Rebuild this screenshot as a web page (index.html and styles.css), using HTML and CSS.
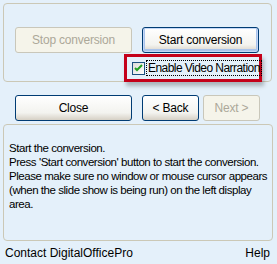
FILE: index.html
```html
<!DOCTYPE html>
<html lang="en">
<head>
    <meta charset="UTF-8">
    <title>Conversion</title>
    <link rel="stylesheet" href="styles.css">
</head>
<body>
    <div class="panel convert-panel">
        <div class="btn-row">
            <button class="btn wide" disabled>Stop conversion</button>
            <button class="btn wide default">Start conversion</button>
        </div>
        <div class="narration">
            <span class="check">
                <svg width="9" height="8" viewBox="0 0 9 8"><path d="M1 4 L3 6 L8 1" fill="none" stroke="#21a121" stroke-width="2"/></svg>
            </span>
            <span class="narration-label">Enable Video Narration</span>
        </div>
    </div>

    <div class="btn-row nav-row">
        <button class="btn wide">Close</button>
        <div class="nav-pair">
            <button class="btn small">&lt; Back</button>
            <button class="btn small" disabled>Next &gt;</button>
        </div>
    </div>

    <div class="panel info">
        <p>Start the conversion.</p>
        <p>Press 'Start conversion' button to start the conversion.</p>
        <p>Please make sure no window or mouse cursor appears (when the slide show is being run) on the left display area.</p>
    </div>

    <div class="footer">
        <span>Contact DigitalOfficePro</span>
        <span>Help</span>
    </div>
</body>
</html>
```

FILE: styles.css
```css
body, html {
    margin: 0;
    padding: 0;
    font-family: "Liberation Sans", Arial, sans-serif;
    font-size: 11px;
    background-color: #e4f0fa;
    color: #000;
}
body {
    width: 277px;
    height: 264px;
    overflow: hidden;
}
.panel {
    border: 1px solid #cbc8b6;
    border-radius: 4px;
    box-sizing: border-box;
}
.convert-panel {
    margin: 3px 5px 0 3px;
    height: 79px;
    padding: 23px 0 0 11px;
}
.btn-row {
    display: flex;
    gap: 10px;
}
.btn {
    font-family: inherit;
    font-size: 12px;
    letter-spacing: -0.2px;
    height: 26px;
    padding: 0;
    border: 1px solid #003c74;
    border-radius: 3px;
    background: linear-gradient(#ffffff, #f3f3ef 70%, #d6d0c5);
    color: #000;
    box-sizing: border-box;
}
.btn.default {
    box-shadow: inset 0 0 0 1px #c4d8f7, inset 0 -1px 0 2px #a9c3ec;
}
.btn:disabled {
    background: #f5f4ea;
    border-color: #c9c7ba;
    color: #aca899;
}
.wide {
    width: 117px;
}
.small {
    width: 57px;
}
.narration {
    display: flex;
    align-items: center;
    width: 138px;
    height: 28px;
    margin: 1px 0 0 109px;
    padding-left: 5px;
    border: 3px solid #c4001a;
    box-sizing: border-box;
    box-shadow: 2px 4px 4px rgba(0, 0, 0, 0.25);
}
.check {
    display: flex;
    align-items: center;
    justify-content: center;
    flex: 0 0 auto;
    width: 11px;
    height: 11px;
    border: 1px solid #1c5180;
    background: linear-gradient(135deg, #dcdcd7, #ffffff);
}
.narration-label {
    margin-left: 2px;
    padding: 0 1px;
    font-size: 12px;
    letter-spacing: -0.55px;
    white-space: nowrap;
    outline: 1px dotted #000;
}
.nav-row {
    margin: 13px 0 0 15px;
}
.nav-pair {
    display: flex;
    gap: 4px;
}
.info {
    margin: 3px 4px 0 3px;
    height: 117px;
    padding: 16px 1px 0 5px;
    line-height: 14px;
    font-size: 11.5px;
    letter-spacing: -0.45px;
}
.info p {
    margin: 0;
}
.footer {
    display: flex;
    justify-content: space-between;
    margin: 5px 7px 0 5px;
    font-size: 12px;
}
```
